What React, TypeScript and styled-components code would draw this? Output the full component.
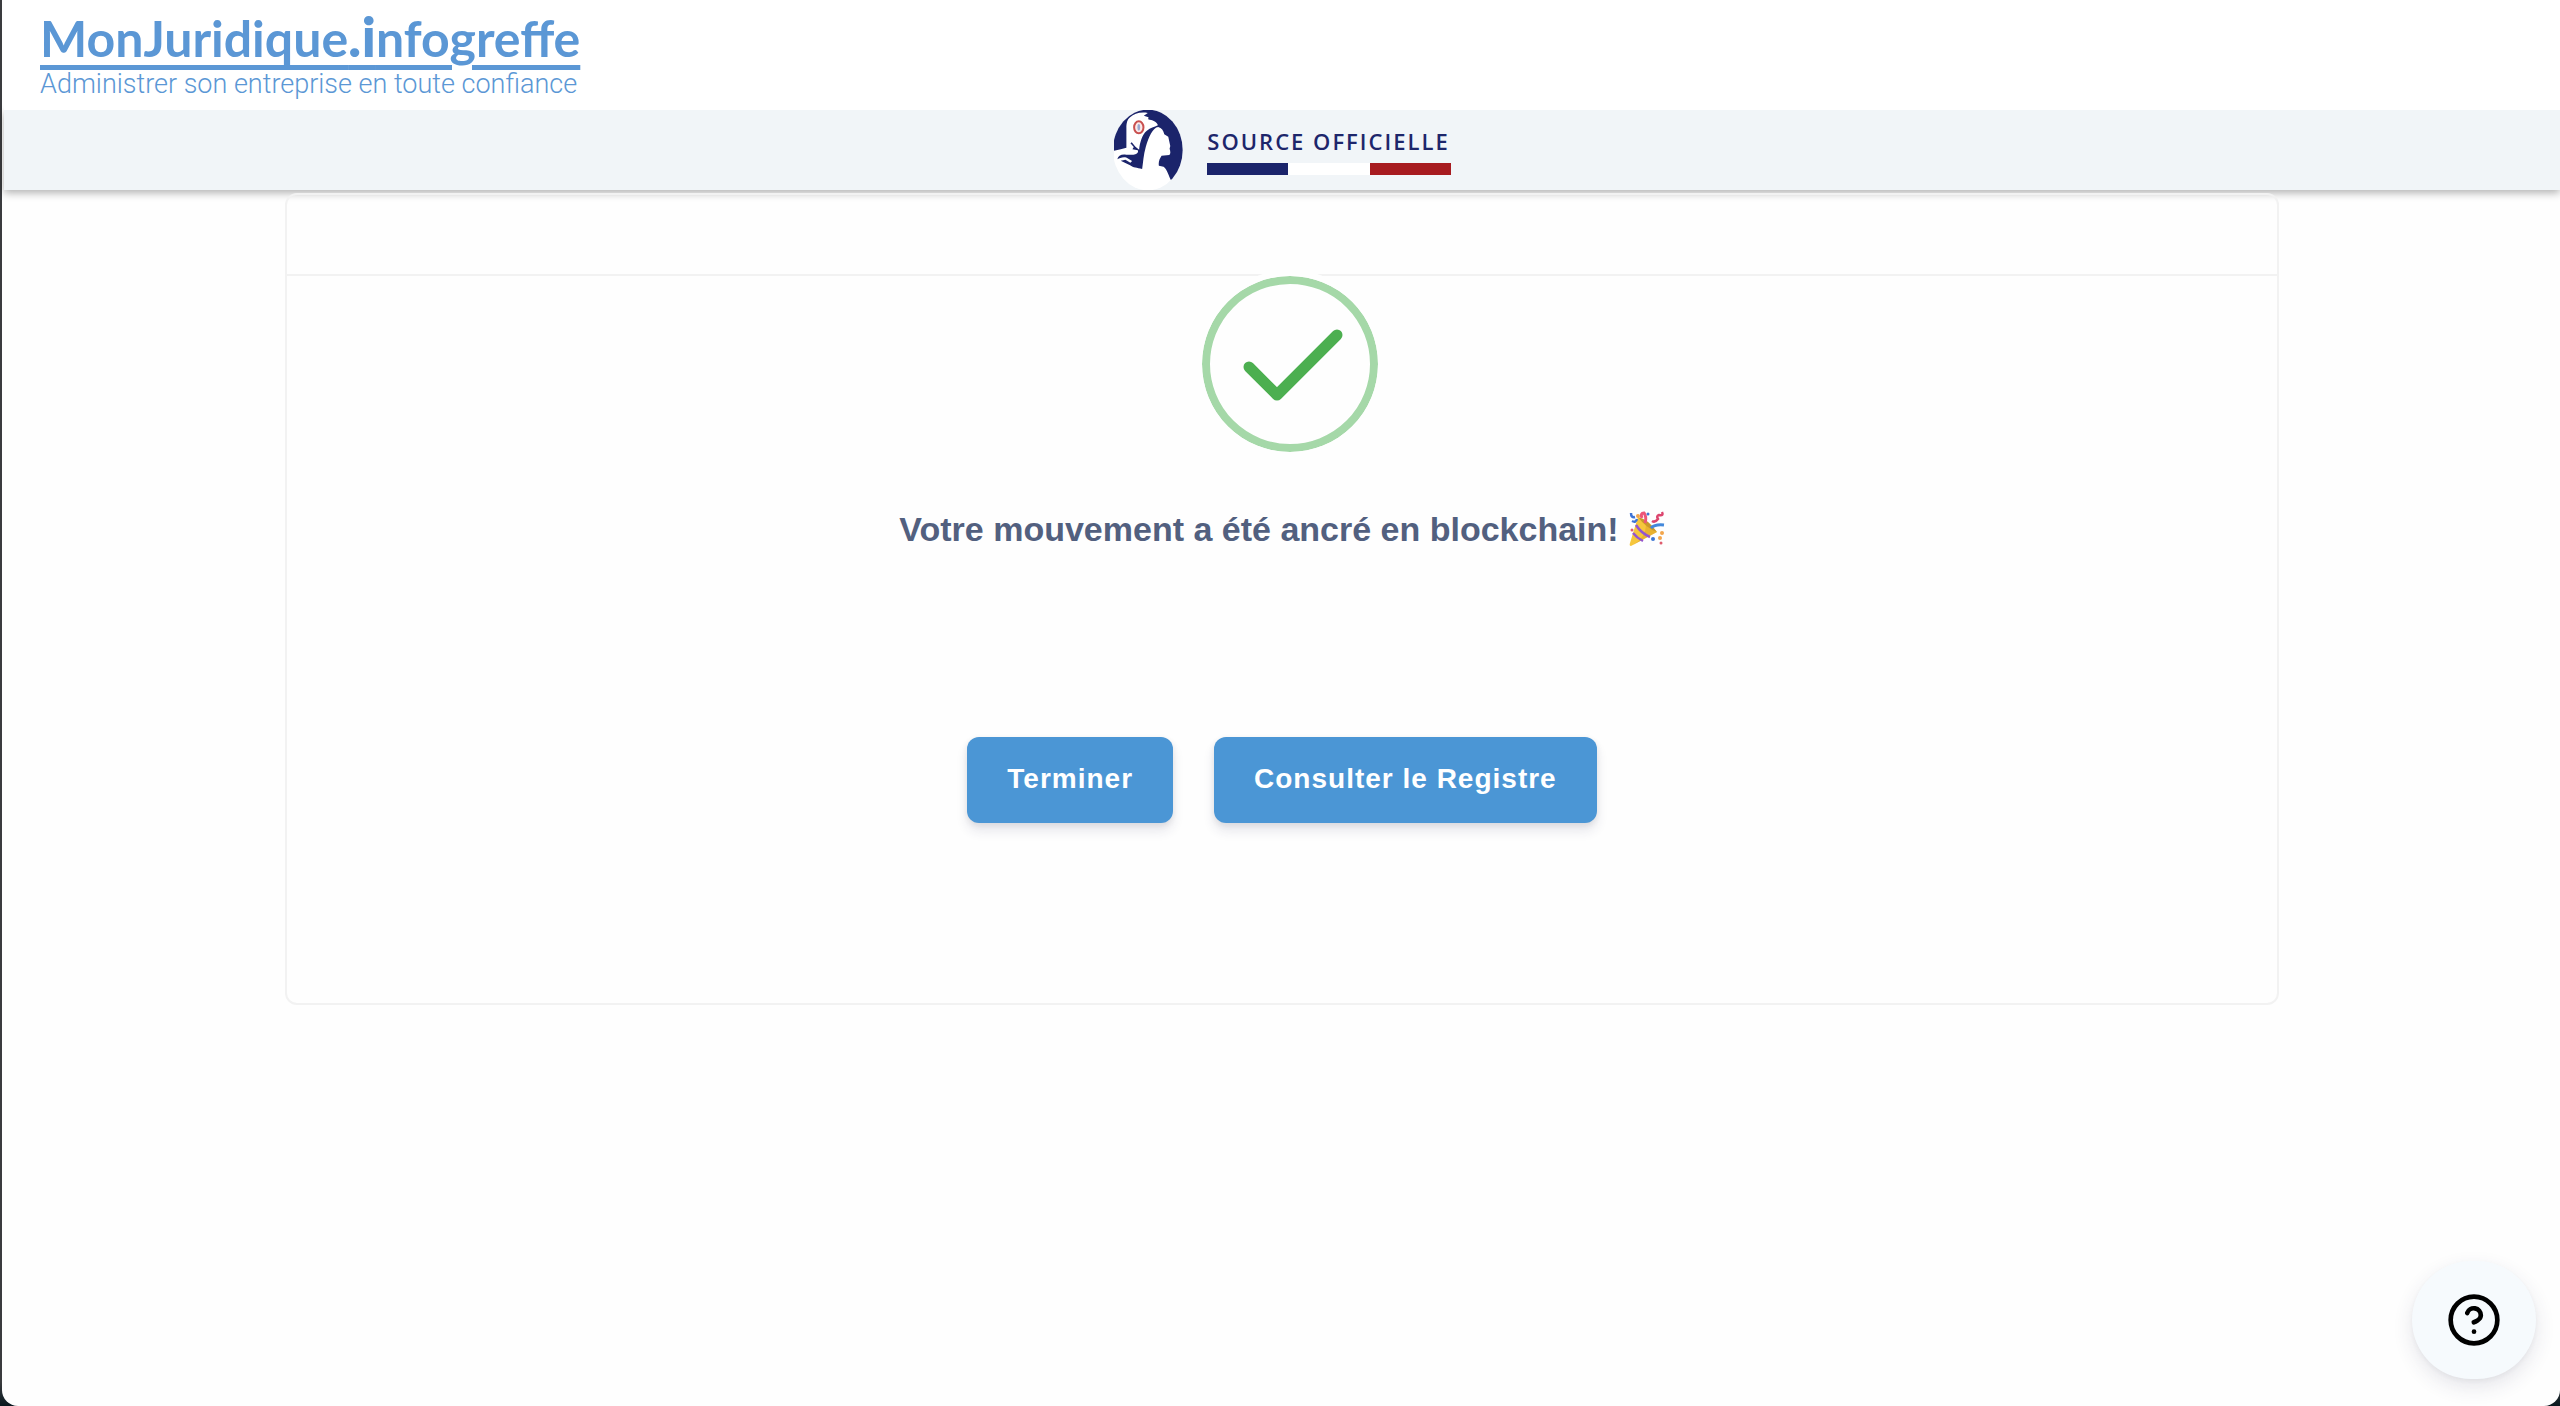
import React from "react";
import styled, { createGlobalStyle } from "styled-components";
import { CircleQuestionMark } from "lucide-react";

const GlobalStyle = createGlobalStyle`
  *, *::before, *::after { box-sizing: border-box; }
  body {
    margin: 0;
    background: linear-gradient(#3a3b3e calc(100% - 24px), #08181e);
    font-family: "Liberation Sans", Arial, Helvetica, sans-serif;
  }
`;

const Page = styled.div`
  display: flex;
  flex-direction: column;
  min-height: 100vh;
  margin-left: 2px;
  padding-left: 2px;
  background: #fefefe;
  border-radius: 0 0 16px 16px;
`;

const Header = styled.header`
  position: relative;
  z-index: 1;
  display: flex;
  align-items: flex-start;
  height: 110px;
  padding: 8px 36px 0;
  background: #fff;
`;

const Brand = styled.a`
  display: flex;
  flex-direction: column;
  color: #5b97d5;
  text-decoration: none;
  white-space: nowrap;
`;

const BrandName = styled.span`
  font: 700 50px/60px Lato, sans-serif;
  text-decoration: underline;
  text-decoration-thickness: 5px;
  text-underline-offset: 8px;
`;

const BrandAccent = styled.span`
  font-size: 56px;
  font-weight: 900;
  line-height: 0;
`;

const Tagline = styled.span`
  font: 300 27px/32px Roboto, sans-serif;
`;

const OfficialBar = styled.div`
  display: flex;
  justify-content: center;
  gap: 24px;
  height: 80px;
  background: #f1f5f8;
  box-shadow: 0 3px 8px rgba(0, 0, 0, 0.3);
`;

const Official = styled.div`
  display: flex;
  flex-direction: column;
  align-items: center;
  padding-top: 15px;
  gap: 6px;
  width: 244px;
  color: #1d266b;
  font: 600 22px/32px "Open Sans", sans-serif;
  letter-spacing: 2px;
  white-space: nowrap;
`;

const Flag = styled.div`
  width: 100%;
  height: 12px;
  background: linear-gradient(90deg, #1b246b 33.3%, #fff 33.3% 66.6%, #a71b20 66.6%);
`;

const Card = styled.main`
  width: 78%;
  margin: 3px auto 0;
  border: 2px solid #f2f2f2;
  border-radius: 12px;
`;

const CardHeader = styled.div`
  height: 81px;
  border-bottom: 2px solid #f2f2f2;
`;

const CardBody = styled.div`
  display: flex;
  flex-direction: column;
  align-items: center;
  padding-bottom: 180px;
`;

const SuccessIcon = styled.svg`
  width: 176px;
  height: 176px;
  margin-left: 16px;
  border-radius: 50%;
  background: #fefefe;
  box-shadow: 0 0 0 6px #fefefe;
`;

const Title = styled.h1`
  display: flex;
  align-items: center;
  gap: 10px;
  margin: 57px 0 0;
  color: #52607f;
  font-size: 34px;
  line-height: 40px;
  font-weight: 700;
`;

const Actions = styled.div`
  display: flex;
  gap: 41px;
  margin-top: 188px;
`;

const Button = styled.button`
  height: 86px;
  padding: 0 40px 3px;
  border: 0;
  border-radius: 12px;
  background: #4b96d5;
  color: #fff;
  font: 700 28px/40px "Liberation Sans", Arial, sans-serif;
  letter-spacing: 1px;
  cursor: pointer;
  box-shadow: 0 8px 12px rgba(50, 50, 93, 0.11), 0 2px 6px rgba(0, 0, 0, 0.08);
`;

const HelpButton = styled.button`
  position: fixed;
  right: 24px;
  bottom: 27px;
  display: flex;
  align-items: center;
  justify-content: center;
  width: 124px;
  height: 118px;
  padding: 0;
  border: 0;
  border-radius: 60px;
  background: #f6fafd;
  color: #000;
  cursor: pointer;
  box-shadow: 0 8px 20px rgba(50, 50, 93, 0.12), 0 2px 6px rgba(0, 0, 0, 0.05);
`;

function Marianne() {
  return (
    <svg width="69" height="80" viewBox="42 30 206 240" preserveAspectRatio="none" role="img" aria-label="Marianne">
      <clipPath id="medal">
        <ellipse cx="143" cy="150" rx="104" ry="121" />
      </clipPath>
      <g clipPath="url(#medal)">
        <rect x="30" y="20" width="230" height="260" fill="#fff" />
        <path
          fill="#1b246b"
          d="M30 20H260V242H213C204 226 202 210 190 200L176 197C174 186 178 176 184 167L207 165C212 160 210 152 208 146L210 138L204 110L192 103C190 91 184 84 174 81C158 82 145 112 137 140C130 164 129 188 126 207C110 203 100 204 90 196L62 182L76 179L91 188L96 183L80 173C68 170 60 174 52 178C54 167 64 162 78 164L100 164C111 162 116 157 113 151L97 148L101 141L91 130L95 127L106 140L117 149C119 128 126 103 140 92C151 83 162 82 173 76C171 65 156 61 144 58L145 52L131 47L143 39C120 35 103 41 90 52C81 59 79 71 79 84V143L62 148L30 155Z"
        />
        <ellipse cx="116" cy="82" rx="14" ry="18" fill="#fbe9e9" stroke="#c9504f" strokeWidth="6" />
        <ellipse cx="116" cy="82" rx="4" ry="10" fill="#9ba8d0" />
      </g>
    </svg>
  );
}

function PartyPopper() {
  return (
    <svg width="36" height="36" viewBox="0 0 36 36" role="img" aria-label="Confettis">
      <path d="M9 6 28 21 2 35Q0 35 1 32Z" fill="#f6c63c" />
      <path d="M17 14 28 21 4 34Q17 26 17 14Z" fill="#d99a22" opacity=".45" />
      <path d="M7 14Q12 22 21 26M4 22Q8 27 14 30" fill="none" stroke="#9455cf" strokeWidth="2.5" />
      <path d="M9 6Q19 8 28 21Q17 17 9 6" fill="#c9982b" />
      <path d="M16 12Q18 6 15 2Q11 2 13 7" fill="none" stroke="#ed5578" strokeWidth="3" />
      <path d="M2 2Q2 7 6 6M3 10Q7 12 8 8" fill="none" stroke="#3f74d5" strokeWidth="2.5" />
      <path d="M22 17Q26 13 35 14" fill="none" stroke="#4388db" strokeWidth="3" />
      <path d="M33 1Q35 5 30 4Q27 5 29 8Q26 12 23 10" fill="none" stroke="#dc456e" strokeWidth="2.5" />
      <g fill="#df5c6d"><circle cx="3" cy="19" r="1.500" /><circle cx="32" cy="32" r="1.500" /></g>
      <g fill="#3e76d4"><circle cx="19" cy="3" r="1.500" /><circle cx="24" cy="28" r="2" /></g>
      <g fill="#f3a64c"><circle cx="9" cy="5" r="2" /><circle cx="33" cy="22" r="2" /><circle cx="31" cy="27" r="2" /></g>
    </svg>
  );
}

export default function App() {
  return (
    <>
      <GlobalStyle />
      <Page>
        <Header>
          <Brand href="#">
            <BrandName>
              MonJuridique<BrandAccent>.i</BrandAccent>nfogreffe
            </BrandName>
            <Tagline>Administrer son entreprise en toute confiance</Tagline>
          </Brand>
        </Header>
        <OfficialBar>
          <Marianne />
          <Official>
            SOURCE OFFICIELLE
            <Flag />
          </Official>
        </OfficialBar>
        <Card>
          <CardHeader />
          <CardBody>
            <SuccessIcon viewBox="0 0 176 176" role="img" aria-label="Succès">
              <circle cx="88" cy="88" r="84" fill="none" stroke="#a5d8a8" strokeWidth="8" />
              <path
                d="M47 91 75 119 135 59"
                fill="none"
                stroke="#4caf50"
                strokeWidth="11"
                strokeLinecap="round"
                strokeLinejoin="round"
              />
            </SuccessIcon>
            <Title>
              Votre mouvement a été ancré en blockchain!
              <PartyPopper />
            </Title>
            <Actions>
              <Button type="button">Terminer</Button>
              <Button type="button">Consulter le Registre</Button>
            </Actions>
          </CardBody>
        </Card>
        <HelpButton type="button" aria-label="Aide">
          <CircleQuestionMark size={56} strokeWidth={2} />
        </HelpButton>
      </Page>
    </>
  );
}
